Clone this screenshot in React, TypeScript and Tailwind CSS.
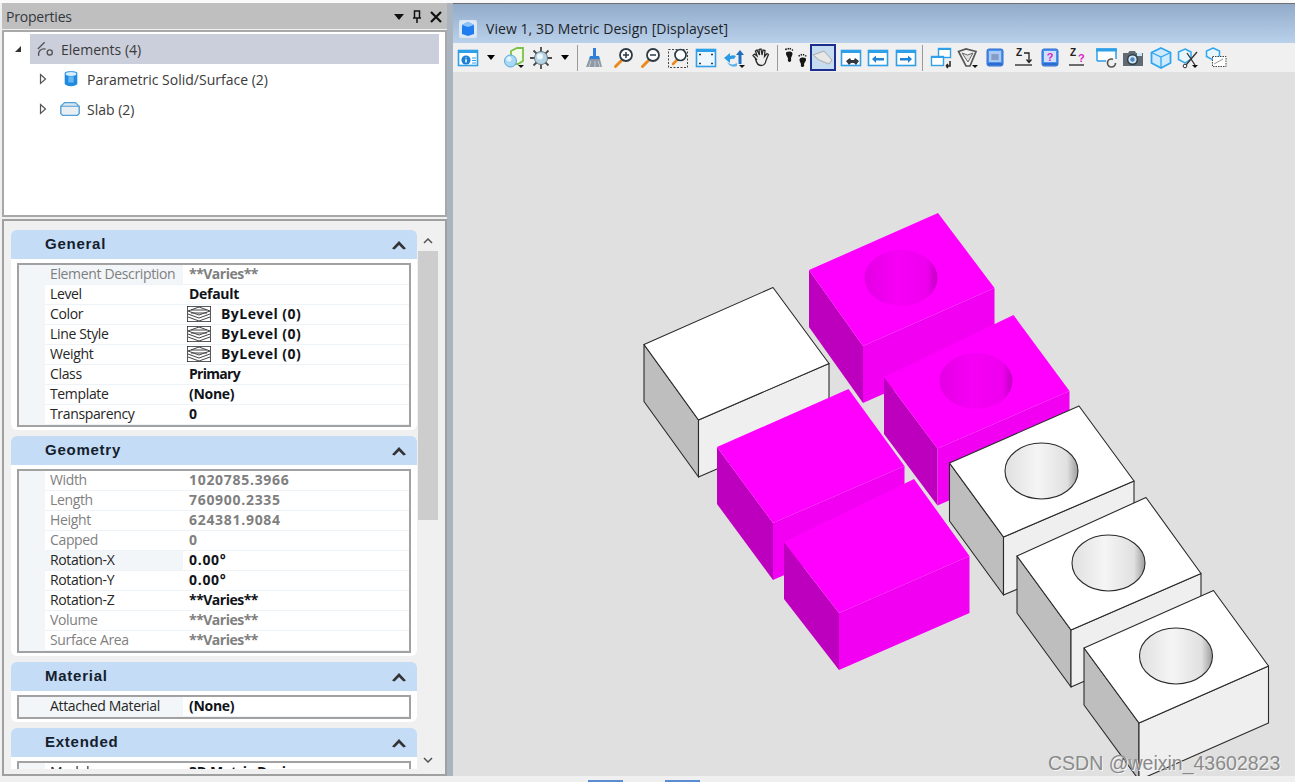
import type { ReactNode } from "react";

const uiFont = "font-['Open_Sans','Noto_Sans',sans-serif]";

function Ic({ className = "", children }: { className?: string; children: ReactNode }) {
  return (
    <svg viewBox="0 0 22 22" className={`h-[22px] w-[22px] shrink-0 ${className}`} fill="none">
      {children}
    </svg>
  );
}

function Caret({ className = "" }: { className?: string }) {
  return <div className={`h-0 w-0 shrink-0 border-x-[4px] border-t-[5px] border-x-transparent border-t-black ${className}`} />;
}

function MiniCaret() {
  return <path d="M15 18h6l-3 3z" fill="#111" />;
}

function Sep({ className = "" }: { className?: string }) {
  return <div className={`h-[26px] w-px shrink-0 bg-[#9a9a9a] ${className}`} />;
}

function Win({ children }: { children?: ReactNode }) {
  return (
    <>
      <rect x="1.5" y="3.5" width="19" height="15" fill="#fff" stroke="#2f9fe8" strokeWidth="1.6" />
      <rect x="1" y="3" width="20" height="3" fill="#2f9fe8" />
      {children}
    </>
  );
}

function Monitor({ q }: { q?: boolean }) {
  return (
    <>
      <rect x="3" y="2" width="16" height="17" rx="2" fill="#4a90ee" stroke="#2f6fd0" />
      <rect x="5" y="4" width="12" height="11" fill={q ? "#cfe0fa" : "#a9c8f2"} />
      <path d="M4 17h14" stroke="#2460c0" strokeWidth="1.5" />
      {q ? (
        <text x="11" y="13.5" textAnchor="middle" fontSize="11" fontWeight="700" fill="#d81fc8" fontFamily="Liberation Sans, sans-serif">?</text>
      ) : (
        <path d="M7 8h8M7 10h8M7 12h8M9 7v6M11 7v6M13 7v6" stroke="#6f86b0" strokeWidth="0.8" />
      )}
    </>
  );
}

function Toolbar() {
  return (
    <div className="flex h-[29px] shrink-0 items-center bg-[#f0f0f0] pl-[4px]">
      {/* view attributes */}
      <Ic>
        <Win />
        <circle cx="9" cy="13" r="4.6" fill="#1b7fd6" />
        <path d="M9 10.5v.8M9 12.3v3.2" stroke="#fff" strokeWidth="1.5" />
        <path d="M15 11h4M15 13.5h4M15 16h4" stroke="#2f9fe8" />
      </Ic>
      <Caret className="ml-[8px]" />
      <Ic className="ml-[8px]">
        <path d="M8 4l6-3h6v13l-5 3H8z" fill="#f2fae8" stroke="#7cc04a" strokeWidth="1.8" />
        <circle cx="7.5" cy="14" r="6" fill="#a9d8f6" stroke="#5aa9de" />
        <circle cx="6" cy="12" r="2.5" fill="#e4f4fd" />
        <MiniCaret />
      </Ic>
      <Ic className="ml-[5px]">
        <path d="M11 0v22M0 11h22M3.5 3.5l15 15M18.5 3.5l-15 15" stroke="#4a4a4a" strokeWidth="1.8" />
        <circle cx="11" cy="11" r="6.5" fill="#b4d4e6" stroke="#66757e" />
        <circle cx="10" cy="9.5" r="3" fill="#eef9ff" />
      </Ic>
      <Caret className="ml-[9px]" />
      <Sep className="ml-[8px]" />
      {/* brush */}
      <Ic className="ml-[5px]">
        <path d="M10 1h3v8h-3z" fill="#2f80d8" />
        <path d="M7 9h9l1 3H6z" fill="#2f80d8" />
        <path d="M6 12h11l2 8H3z" fill="#8e9aa6" />
        <path d="M8 14l-2 6M12 14v6M15 14l2 6" stroke="#c5ccd3" />
      </Ic>
      {/* zoom in */}
      <Ic className="ml-[8px]">
        <path d="M2.5 19.5l6-6" stroke="#ea8a1e" strokeWidth="3" strokeLinecap="round" />
        <circle cx="13" cy="8" r="6" fill="#fff" stroke="#2b3a45" strokeWidth="1.8" />
        <path d="M10 8h6M13 5v6" stroke="#2b3a45" strokeWidth="1.5" />
      </Ic>
      {/* zoom out */}
      <Ic className="ml-[5px]">
        <path d="M2.5 19.5l6-6" stroke="#ea8a1e" strokeWidth="3" strokeLinecap="round" />
        <circle cx="13" cy="8" r="6" fill="#fff" stroke="#2b3a45" strokeWidth="1.8" />
        <path d="M10 8h6" stroke="#2b3a45" strokeWidth="1.5" />
      </Ic>
      {/* zoom window */}
      <Ic className="ml-[5px]">
        <rect x="1.5" y="2.5" width="19" height="18" stroke="#444" strokeDasharray="2 1.5" />
        <path d="M6 17l4-4" stroke="#ea8a1e" strokeWidth="2.6" strokeLinecap="round" />
        <circle cx="13.5" cy="8" r="5.5" fill="#fff" stroke="#2b3a45" strokeWidth="1.7" />
      </Ic>
      {/* fit view */}
      <Ic className="ml-[6px]">
        <rect x="1.5" y="2.5" width="19" height="17" fill="#eef7fe" stroke="#2f9fe8" strokeWidth="1.6" />
        <rect x="1" y="2" width="20" height="3" fill="#2f9fe8" />
        <path d="M4 7.5h2M16 7.5h2M4 16.5h2M16 16.5h2" stroke="#2b3a45" strokeWidth="1.4" />
      </Ic>
      {/* rotate view */}
      <Ic className="ml-[7px]">
        <path d="M0 11l6-5v3c2-1 4-1 6 0l-2 3c-1-.5-3-.5-4 .5V16z" fill="#2b9be8" />
        <path d="M16 3l4 5h-2.5v9h-3V8H12z" fill="#1f6fc0" />
        <path d="M3 15c3 3 7 3 10 1v3c-4 1.5-8 .5-10-4z" fill="#5db2ef" />
        <MiniCaret />
      </Ic>
      {/* pan */}
      <Ic className="ml-[4px]">
        <path d="M7 13L3 8.5l1.500-1.500L7 9 5.500 4 7 3l2.500 5L9 2.500 11 2l1 6 1-5 2 .5-.5 6 2.500-3 1.500 1-2.500 6c-.5 3-2 5-5 5-3 0-4.500-2-5.500-6.500z" fill="#eeeeee" stroke="#2a2a2a" strokeWidth="1.3" />
      </Ic>
      <Sep className="ml-[5px]" />
      {/* walk */}
      <Ic className="ml-[7px]">
        <path d="M1 5.500c2-1.500 6-1.500 6.500 1 .3 2-1.500 3-1.500 5 .6 1.500 0 3.500-1.500 3.500S2.500 13.500 3 11.500C2.500 9.500 .5 8 1 5.500z" fill="#161616" />
        <path d="M.5 3l1-1.500M3 2.500l.5-1.500M5 2.500l.5-1.500M7 3.500l.8-1" stroke="#161616" strokeWidth="1.400" />
        <path d="M21 11.500c-2-1.500-6-1.500-6.500 1-.3 2 1.500 3 1.500 5-.6 1.500 0 2.500 1.500 2.500s2-1 1.500-3c.5-2 2.500-3 2-5.500z" fill="#161616" />
        <path d="M14.500 9.500l-.5-1.500M16.500 8.500l-.3-1.500M18.500 8.500l.2-1.500M20.500 9.500l.5-1.200" stroke="#161616" strokeWidth="1.400" />
      </Ic>
      {/* active view toggle */}
      <div className="ml-[3px] flex h-[27px] w-[26px] shrink-0 items-center justify-center border-2 border-[#1c2f8f] bg-[#c6dcf0]">
        <Ic>
          <path d="M1 8l11-4 8 9-3 4-10-4z" fill="#e8e8e8" stroke="#a9a9a9" />
          <path d="M1 8l6 5 10 4" stroke="#bbb" />
        </Ic>
      </div>
      {/* window with arrows */}
      <Ic className="ml-[4px]">
        <Win />
        <path d="M6 14l4-3 1 2h3l1-2 4 3-3 4-2-2h-3l-2 2z" fill="#33383e" />
      </Ic>
      <Ic className="ml-[5px]">
        <Win />
        <path d="M5 12l4-3.5V11h8v2.500H9V16z" fill="#1f84d8" />
      </Ic>
      <Ic className="ml-[6px]">
        <Win />
        <path d="M17 12l-4-3.500V11H5v2.500h8V16z" fill="#1f84d8" />
      </Ic>
      <Sep className="ml-[5px]" />
      {/* copy view */}
      <Ic className="ml-[7px]">
        <rect x="8.5" y="1.5" width="12" height="9" fill="#fff" stroke="#2f9fe8" strokeWidth="1.4" />
        <rect x="1.5" y="9.5" width="12" height="9" fill="#fff" stroke="#2f9fe8" strokeWidth="1.4" />
        <path d="M1 10h13M8 2h13" stroke="#2f9fe8" strokeWidth="1.8" />
        <path d="M20 14v5h-4M16 19l2-2M16 19l2 2" stroke="#222" strokeWidth="1.5" />
      </Ic>
      {/* view cone */}
      <Ic className="ml-[5px]">
        <path d="M1.5 4.500L9 2l10 2.500L13 19H9z" fill="#f4f4f4" stroke="#555" strokeWidth="1.7" />
        <path d="M5 6l5.500 2L16 6l-5 9z" fill="#e2e2e2" stroke="#666" />
        <MiniCaret />
      </Ic>
      <Ic className="ml-[5px]">
        <Monitor />
      </Ic>
      {/* z depth */}
      <Ic className="ml-[6px]">
        <text x="4" y="9" fontSize="10" fontWeight="700" fill="#222" fontFamily="Liberation Sans, sans-serif">Z</text>
        <path d="M12 6h5v9M14.5 12.500l2.500 3 2.500-3" stroke="#222" strokeWidth="1.3" />
        <path d="M3 18h17" stroke="#222" strokeWidth="1.3" />
      </Ic>
      <Ic className="ml-[5px]">
        <Monitor q />
      </Ic>
      <Ic className="ml-[5px]">
        <text x="4" y="9" fontSize="10" fontWeight="700" fill="#222" fontFamily="Liberation Sans, sans-serif">Z</text>
        <text x="12" y="15" fontSize="11" fontWeight="700" fill="#d81fc8" fontFamily="Liberation Sans, sans-serif">?</text>
        <path d="M3 18h15" stroke="#222" strokeWidth="1.3" />
      </Ic>
      {/* update view */}
      <Ic className="ml-[7px]">
        <path d="M2 14V2h19v10" fill="#fff" stroke="#2f9fe8" strokeWidth="1.5" />
        <path d="M1 3h21" stroke="#2f9fe8" strokeWidth="3" />
        <path d="M2 14h9" stroke="#2f9fe8" strokeWidth="1.5" />
        <circle cx="16.5" cy="16" r="4" stroke="#555" strokeWidth="1.7" strokeDasharray="20 5" />
      </Ic>
      {/* camera */}
      <Ic className="ml-[5px]">
        <path d="M1 6h5l1.500-2H13l1 2h7v13H1z" fill="#5f6a73" />
        <path d="M15 6h5v3h-5z" fill="#cfe6f7" />
        <circle cx="10.5" cy="12.5" r="4.8" fill="#cfe6f7" stroke="#2d3840" strokeWidth="1.4" />
        <circle cx="10.5" cy="12.5" r="2.2" fill="#4d87bd" />
      </Ic>
      {/* cube */}
      <Ic className="ml-[6px]">
        <path d="M11 1l9.500 4.500V16L11 21 1.500 16V5.500z" fill="#cfeafd" stroke="#2fa5ee" strokeWidth="1.8" />
        <path d="M1.5 5.500L11 10l9.500-4.500M11 10v11" stroke="#2fa5ee" strokeWidth="1.3" />
      </Ic>
      {/* clip volume */}
      <Ic className="ml-[5px]">
        <path d="M8 2l6 3v7l-6 4-6.500-3.500V5z" fill="#eaf6fe" stroke="#2fa5ee" strokeWidth="1.5" />
        <path d="M20 5L9 18M10 6l8 12" stroke="#333" strokeWidth="1.3" />
        <circle cx="8" cy="19" r="1.8" fill="#fff" stroke="#333" />
        <MiniCaret />
      </Ic>
      <Ic className="ml-[6px]">
        <path d="M8 1l6.500 3v5L8 13l-6.500-3.500V4z" fill="#eaf6fe" stroke="#2fa5ee" strokeWidth="1.5" />
        <rect x="7.5" y="9.5" width="13.5" height="10" fill="#fff" stroke="#444" strokeDasharray="1.5 1" />
        <path d="M9 17l9-5" stroke="#999" />
      </Ic>
    </div>
  );
}

type Pt = [number, number];

// one box of the isometric view, given by its left, back, right and front top corners
function Box({
  l, b, r, f, h, top, side, front, line, hole,
}: {
  l: Pt; b: Pt; r: Pt; f: Pt; h: number; top: string; side: string; front: string; line?: string; hole?: { c: Pt; fill: string };
}) {
  const p = (...pts: Pt[]) => pts.map((q) => q.join(",")).join(" ");
  const d = (q: Pt): Pt => [q[0], q[1] + h];
  const s = line ? { stroke: line, strokeWidth: 1.1, strokeLinejoin: "round" as const } : {};
  return (
    <g>
      <polygon points={p(l, f, d(f), d(l))} fill={side} {...s} />
      <polygon points={p(f, r, d(r), d(f))} fill={front} {...s} />
      <polygon points={p(l, b, r, f)} fill={top} {...s} />
      {hole && <ellipse cx={hole.c[0]} cy={hole.c[1]} rx={36.5} ry={28} fill={hole.fill} {...s} />}
    </g>
  );
}

function Scene() {
  const m = { top: "#ff00ff", side: "#bd00bd", front: "#f200f2" };
  const w = { top: "#ffffff", side: "#bebebe", front: "#efefef", line: "#2a2a2a" };
  return (
    <svg viewBox="453 72 842 704" className="h-[704px] w-[842px]">
      <defs>
        <linearGradient id="holeM" x1="0" x2="1" y1="0" y2="0">
          <stop offset="0" stopColor="#e400e4" />
          <stop offset="0.45" stopColor="#f600f6" />
          <stop offset="0.86" stopColor="#ee00ee" />
          <stop offset="1" stopColor="#c200c2" />
        </linearGradient>
        <linearGradient id="holeW" x1="0" x2="1" y1="0" y2="0">
          <stop offset="0" stopColor="#e0e0e0" />
          <stop offset="0.45" stopColor="#f5f5f5" />
          <stop offset="0.85" stopColor="#e0e0e0" />
          <stop offset="1" stopColor="#9c9c9c" />
        </linearGradient>
      </defs>
      <Box {...m} l={[809, 270]} b={[938, 213]} r={[994.5, 288]} f={[863, 346]} h={57} hole={{ c: [901, 278], fill: "url(#holeM)" }} />
      <Box {...w} l={[644, 344.5]} b={[773, 287.5]} r={[829, 363.5]} f={[698.5, 420]} h={57} />
      <Box {...m} l={[884, 377]} b={[1013.5, 315]} r={[1069.5, 391]} f={[937.5, 448.5]} h={57} hole={{ c: [976, 381], fill: "url(#holeM)" }} />
      <Box {...m} l={[717, 447]} b={[848.5, 389]} r={[904.5, 466]} f={[773, 523]} h={57} />
      <Box {...m} l={[784, 542]} b={[914, 479]} r={[969.5, 556]} f={[839, 613]} h={57} />
      <Box {...w} l={[949.5, 463]} b={[1079, 406]} r={[1134, 481]} f={[1003.5, 537]} h={58} hole={{ c: [1041.5, 471], fill: "url(#holeW)" }} />
      <Box {...w} l={[1017, 556]} b={[1146, 497.5]} r={[1201, 573.5]} f={[1071, 630]} h={57} hole={{ c: [1108.5, 563], fill: "url(#holeW)" }} />
      <Box {...w} l={[1084, 648]} b={[1213.5, 590.5]} r={[1268.5, 666]} f={[1139, 723]} h={57} hole={{ c: [1176, 656], fill: "url(#holeW)" }} />
    </svg>
  );
}

function TreeRow({ open, icon, label }: { open?: boolean; icon: ReactNode; label: string }) {
  return (
    <div className="flex h-[30px] items-center">
      {open ? (
        <svg viewBox="0 0 8 8" className="ml-[10px] h-[8px] w-[8px] shrink-0"><path d="M7 1v6H1z" fill="#333" /></svg>
      ) : (
        <svg viewBox="0 0 8 12" className="ml-[35px] h-[12px] w-[8px] shrink-0"><path d="M1.5 1.500l5 4.500-5 4.500z" fill="#fff" stroke="#555" strokeWidth="1.2" /></svg>
      )}
      <div className={`flex h-[30px] grow items-center ${open ? "ml-[8px] bg-[#cbcedb] pl-[7px]" : "ml-[15px]"}`}>
        {icon}
        <span className="ml-[7px] text-[14px] text-[#3a3a3a]">{label}</span>
      </div>
    </div>
  );
}

type Row = { k: string; v: string; dim?: boolean; level?: boolean; tint?: boolean; track?: string };

function LevelSwatch() {
  return (
    <svg viewBox="0 0 24 16" className="mt-[1px] mr-[10px] ml-[-2px] h-[16px] w-[24px] shrink-0">
      <rect width="24" height="16" fill="#fff" stroke="#222" strokeWidth="1.5" />
      <path d="M1 5l11-4 11 4-11 4zM1 8l11 4 11-4M1 11l11 4 11-4M4 4h16M4 7h16" fill="none" stroke="#444" strokeWidth="1" />
    </svg>
  );
}

function Section({ title, rows, className = "" }: { title: string; rows: Row[]; className?: string }) {
  return (
    <div className={`w-[406px] shrink-0 ${className}`}>
      <div className="flex h-[29px] items-center justify-between rounded-t-[6px] bg-[#c5dcf7] pr-[11px] pl-[34px]">
        <span className="font-['Liberation_Sans',sans-serif] text-[15px] font-bold tracking-[0.75px] text-[#14202c]">{title}</span>
        <svg viewBox="0 0 14 10" className="h-[10px] w-[14px]"><path d="M0 8.500L7 1l7 7.500-2.500 1L7 5l-4.500 4.500z" fill="#333" /></svg>
      </div>
      <div className="rounded-b-[6px] bg-white px-[6px] pt-[4px] pb-[3px]">
        <div className="border-2 border-[#a2a2a2]">
          {rows.map((r) => (
            <div key={r.k} className="flex h-[20px] bg-[#f3f6f9]">
              <div className="w-[26px] shrink-0" />
              <div className={`w-[138px] shrink-0 border-b border-[#eef3f8] pl-[5px] text-[14px] leading-[18px] tracking-[-0.35px] ${r.tint ? "bg-[#f3f6f9]" : "bg-white"} ${r.dim ? "text-[#7f7f7f]" : "text-[#262626]"}`}>
                {r.k}
              </div>
              <div className={`flex h-[20px] grow items-start border-b border-[#eef3f8] bg-white pl-[6px] text-[14px] leading-[18px] font-bold ${r.track ?? "tracking-[-0.3px]"} ${r.dim ? "text-[#7f7f7f]" : "text-[#10141a]"}`}>
                {r.level && <LevelSwatch />}
                {r.v}
              </div>
            </div>
          ))}
        </div>
      </div>
    </div>
  );
}

const numTrack = "tracking-[0.7px]";
const levelTrack = "tracking-[0.45px]";
const variesTrack = "tracking-[-0.5px]";

const general: Row[] = [
  { k: "Element Description", v: "**Varies**", dim: true, tint: true, track: variesTrack },
  { k: "Level", v: "Default" },
  { k: "Color", v: "ByLevel (0)", level: true, track: levelTrack },
  { k: "Line Style", v: "ByLevel (0)", level: true, track: levelTrack },
  { k: "Weight", v: "ByLevel (0)", level: true, track: levelTrack },
  { k: "Class", v: "Primary", track: "tracking-[-0.7px]" },
  { k: "Template", v: "(None)" },
  { k: "Transparency", v: "0" },
];

const geometry: Row[] = [
  { k: "Width", v: "1020785.3966", dim: true, track: numTrack },
  { k: "Length", v: "760900.2335", dim: true, track: numTrack },
  { k: "Height", v: "624381.9084", dim: true, track: numTrack },
  { k: "Capped", v: "0", dim: true },
  { k: "Rotation-X", v: "0.00°", tint: true, track: numTrack },
  { k: "Rotation-Y", v: "0.00°", track: numTrack },
  { k: "Rotation-Z", v: "**Varies**", track: variesTrack },
  { k: "Volume", v: "**Varies**", dim: true, track: variesTrack },
  { k: "Surface Area", v: "**Varies**", dim: true, track: variesTrack },
];

export default function App() {
  return (
    <div className={`relative flex h-[782px] w-[1295px] flex-col overflow-hidden bg-[#f0f0f0] ${uiFont}`}>
      <div className="h-[3px] shrink-0 bg-[#fafafa]" />
      <div className="flex h-[773px] shrink-0">
        {/* properties dock */}
        <div className="flex w-[447px] shrink-0 flex-col pl-[2px]">
          <div className="flex h-[26px] shrink-0 items-center justify-between bg-[#bfbfbf] pt-[1px] pr-[5px] pl-[4px]">
            <span className="text-[14px] tracking-[-0.2px] text-[#33383e]">Properties</span>
            <div className="flex items-center gap-[9px]">
              <svg viewBox="0 0 10 6" className="h-[6px] w-[10px]"><path d="M0 0h10L5 6z" fill="#111" /></svg>
              <svg viewBox="0 0 8 13" className="h-[13px] w-[8px]"><path d="M1.5 1h5v7h-5zM0 8h8M4 8v5" fill="none" stroke="#111" strokeWidth="1.5" /></svg>
              <svg viewBox="0 0 12 12" className="h-[12px] w-[12px]"><path d="M1 1l10 10M11 1L1 11" stroke="#111" strokeWidth="2.2" /></svg>
            </div>
          </div>
          <div className="mt-[1px] h-[187px] shrink-0 border-2 border-[#a8a8a8] bg-white pt-[2px] pr-[6px]">
            <TreeRow
              open
              label="Elements (4)"
              icon={
                <svg viewBox="0 0 20 18" className="h-[18px] w-[17px] shrink-0">
                  <path d="M1 9l8-8M2 17c-1-6 3-9 8-8" fill="none" stroke="#555" strokeWidth="1.6" />
                  <circle cx="15" cy="13" r="3" fill="none" stroke="#555" strokeWidth="1.6" />
                </svg>
              }
            />
            <TreeRow
              label="Parametric Solid/Surface (2)"
              icon={
                <svg viewBox="0 0 20 20" className="h-[20px] w-[18px] shrink-0">
                  <path d="M3 3c2-2 12-2 14 0v12c-1 4-13 4-14 0z" fill="#1f8ae0" />
                  <ellipse cx="10" cy="4.5" rx="6" ry="2.2" fill="#d8eefc" />
                  <path d="M7 7h6v7H7z" fill="#66b6f0" />
                </svg>
              }
            />
            <TreeRow
              label="Slab (2)"
              icon={
                <svg viewBox="0 0 22 16" className="ml-[-2px] h-[16px] w-[20px] shrink-0">
                  <path d="M1 5l4-4h12l4 4v8l-2 2H3l-2-2z" fill="#d9e6f0" stroke="#4f9fd8" strokeWidth="1.3" />
                  <path d="M1 5h20v8l-2 2H3l-2-2z" fill="#e9eef2" stroke="#4f9fd8" strokeWidth="1.3" />
                </svg>
              }
            />
          </div>
          <div className="mt-[2px] flex h-[557px] shrink-0 items-start border-2 border-[#a0a0a0] bg-[#f0f0f0] pl-[7px]">
            <div className="flex h-[548px] flex-col overflow-hidden pt-[9px]">
              <Section title="General" rows={general} />
              <Section title="Geometry" rows={geometry} className="mt-[6px]" />
              <Section title="Material" rows={[{ k: "Attached Material", v: "(None)", tint: true }]} className="mt-[6px]" />
              <Section title="Extended" rows={[{ k: "Model", v: "3D Metric Design" }]} className="mt-[6px]" />
            </div>
            <div className="ml-[1px] flex h-[548px] w-[20px] shrink-0 flex-col items-center pt-[17px] pb-[6px]">
              <svg viewBox="0 0 10 6" className="h-[6px] w-[10px] shrink-0"><path d="M1 5l4-4 4 4" fill="none" stroke="#555" strokeWidth="1.5" /></svg>
              <div className="mt-[7px] h-[269px] w-full shrink-0 bg-[#cdcdcd]" />
              <div className="grow" />
              <svg viewBox="0 0 10 6" className="h-[6px] w-[10px] shrink-0"><path d="M1 1l4 4 4-4" fill="none" stroke="#555" strokeWidth="1.5" /></svg>
            </div>
          </div>
        </div>
        {/* splitter */}
        <div className="w-[6px] shrink-0 bg-[#a9b4be]" />
        {/* view window */}
        <div className="flex grow flex-col bg-[#e0e0e0]">
          <div className="h-[1px] shrink-0 bg-[#6f6f6f]" />
          <div className="flex h-[39px] shrink-0 items-center bg-gradient-to-b from-[#91abc9] to-[#bad1eb] pt-[10px] pl-[6px]">
            <svg viewBox="0 0 18 18" className="h-[18px] w-[18px]">
              <rect width="18" height="18" rx="2" fill="#dbe7f4" />
              <path d="M3 5l6-3 6 3v9l-6 2-6-2z" fill="#1f7df0" />
              <path d="M3 5l6 2 6-2-6-3z" fill="#8fc4fa" />
            </svg>
            <span className="ml-[9px] text-[14px] tracking-[0.05px] text-[#20242a]">View 1, 3D Metric Design [Displayset]</span>
          </div>
          <Toolbar />
          <Scene />
        </div>
      </div>
      {/* status strip */}
      <div className="flex h-[6px] shrink-0 items-end pl-[588px]">
        <div className="h-[2px] w-[35px] bg-[#5b8bd0]" />
        <div className="ml-[42px] h-[2px] w-[35px] bg-[#5b8bd0]" />
      </div>
      <div className="absolute top-[751px] left-[1048px] font-['Liberation_Sans',sans-serif] text-[19.5px] leading-[24px] whitespace-nowrap text-[#8a8a8a] [text-shadow:1px_1px_0_#f6f6f6]">
        CSDN @weixin_43602823
      </div>
    </div>
  );
}
